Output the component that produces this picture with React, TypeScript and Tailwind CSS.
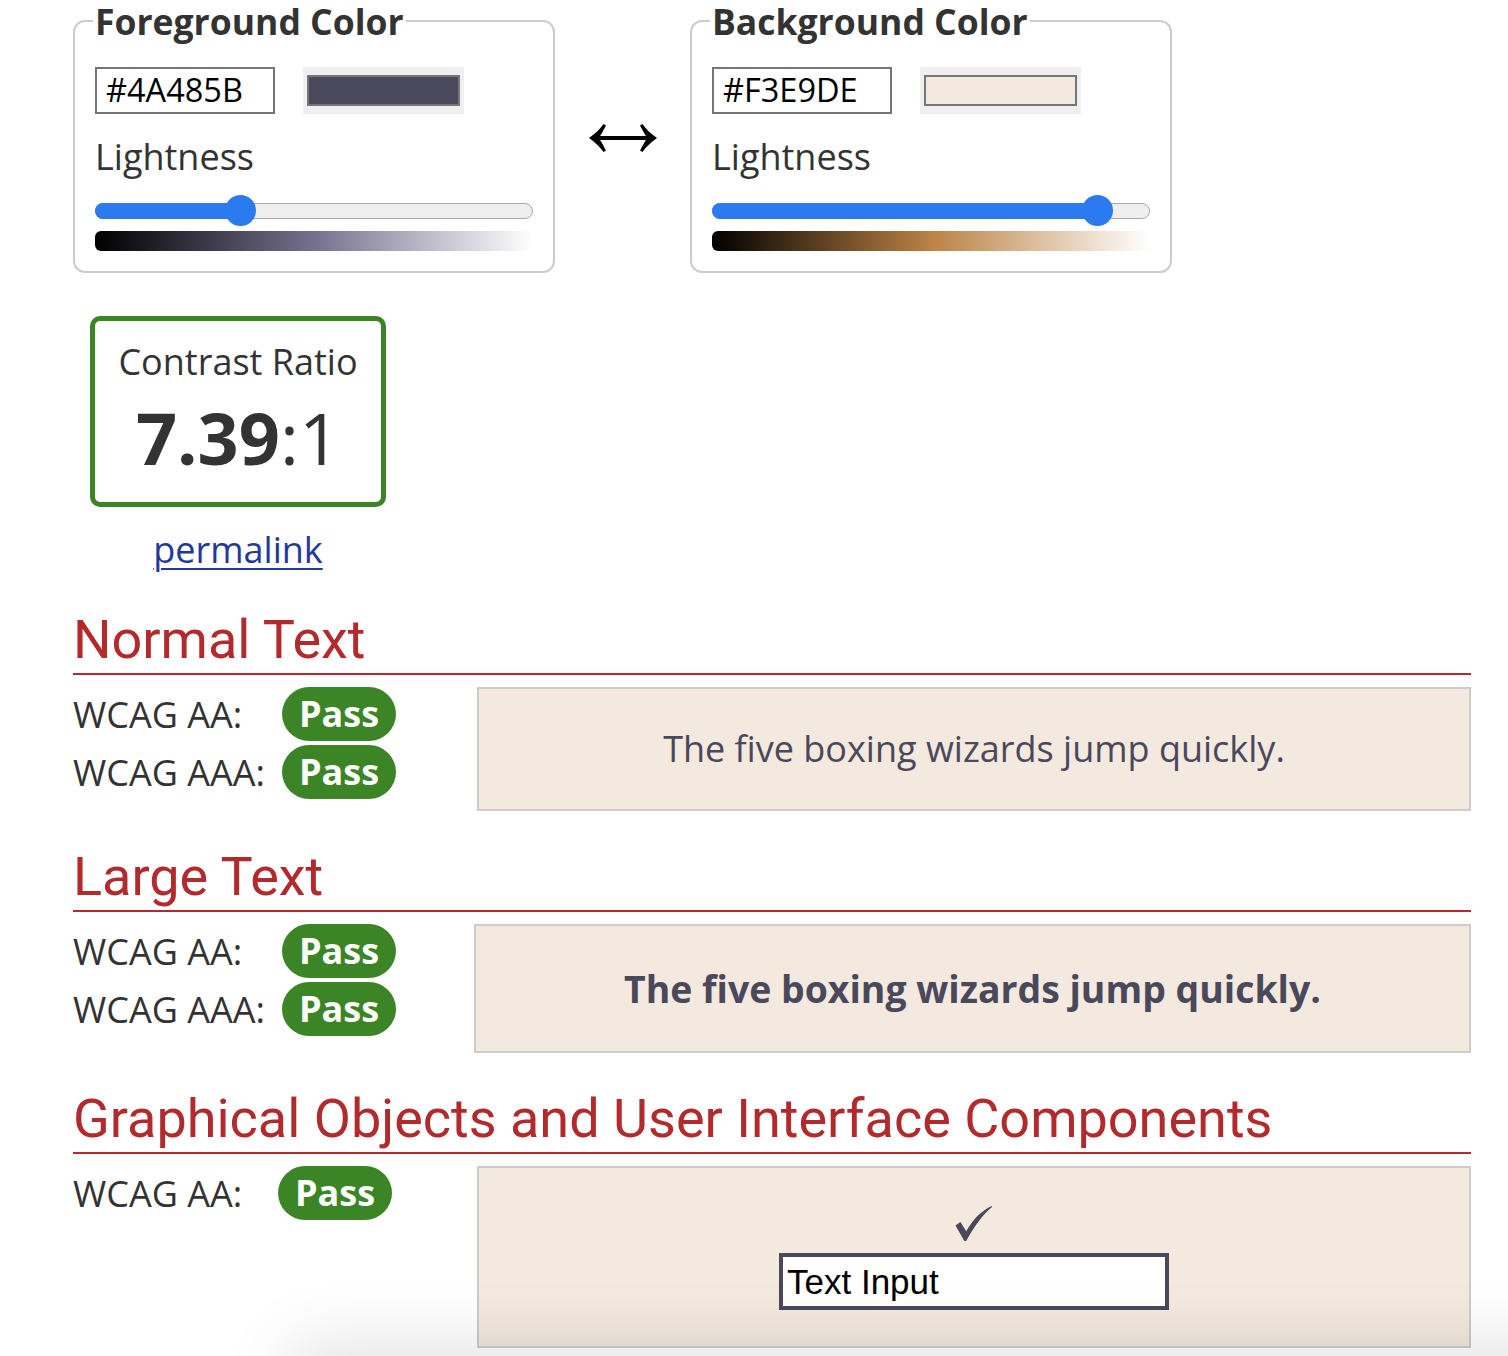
import React from "react";

type FS = { title: string; hex: string; frac: number; grad: string; swatch: string };

function ColorFieldset({ title, hex, frac, grad, swatch }: FS) {
  const trackW = 437.5;
  const thumb = 31;
  const center = thumb / 2 + frac * (trackW - thumb);
  return (
    <fieldset className="w-[482px] rounded-[12px] border-2 border-[#cccccc] px-[20px] pb-[20px]">
      <legend className="ml-[-2px] px-[2px] text-[35.5px] font-bold leading-[42px] text-[#333333]">{title}</legend>
      <div className="mt-[25px] flex h-[47px]">
        <div className="h-[47px] w-[180px] border-2 border-[#767676] pl-[9px] text-[32.5px] leading-[41px] text-black">{hex}</div>
        <div className="ml-[28px] h-[47px] w-[161px] bg-[#efefef] px-[4px] py-[8px]">
          <div className={`h-full w-full border-2 border-[#767676] ${swatch}`} />
        </div>
      </div>
      <div className="mt-[18px] text-[36px] leading-[49px] text-[#333333]">Lightness</div>
      <div className="relative mt-[14px] h-[31px] w-[437.5px]">
        <div className="absolute left-0 right-0 top-[8px] h-[15.5px] rounded-full border border-[#a9a9a9] bg-[#efefef]" />
        <div
          className="absolute left-0 top-[8px] h-[15.5px] rounded-l-full bg-[#2b7af0]"
          style={{ width: center }}
        />
        <div
          className="absolute top-0 h-[31px] w-[31px] rounded-full bg-[#2b7af0]"
          style={{ left: center - thumb / 2 }}
        />
      </div>
      <div className={`mt-[5px] h-[20px] w-[437.5px] rounded-[6px] ${grad}`} />
    </fieldset>
  );
}

function Pill() {
  return (
    <div className="h-[54px] rounded-full bg-[#3c8527] px-[17px] text-[36px] font-bold leading-[54px] text-white">
      Pass
    </div>
  );
}

function LabelRow({ label, w }: { label: string; w: string }) {
  return (
    <div className="flex h-[54px] items-center">
      <div className={`${w} text-[36px] leading-[49px] text-[#333333]`}>{label}</div>
      <Pill />
    </div>
  );
}

function Heading({ children }: { children: React.ReactNode }) {
  return (
    <h2 className="mt-[34px] border-b-2 border-[#b22a2c] pb-[2px] font-['Roboto',sans-serif] text-[54px] leading-[63px] text-[#b22a2c]">
      {children}
    </h2>
  );
}

export default function App() {
  return (
    <div className="relative h-[1356px] overflow-hidden bg-white font-['Open_Sans',sans-serif] text-[#333333]">
      <div className="w-[1471px] pl-[73px]">
        <div className="flex items-start">
          <ColorFieldset
            title="Foreground Color"
            hex="#4A485B"
            frac={0.3196}
            swatch="bg-[#4a485b]"
            grad="bg-[linear-gradient(to_right,#000000,#74718e,#ffffff)]"
          />
          <div className="flex w-[135px] justify-center pt-[124px]">
            <svg width="68" height="28" viewBox="0 0 68 28" fill="#000">
              <path d="M0 14 C6 10 11 5 14.5 0 L17 1.5 C14.5 6 12.5 10 11 12 L57 12 C55.5 10 53.5 6 51 1.5 L53.5 0 C57 5 62 10 68 14 C62 18 57 23 53.5 28 L51 26.5 C53.5 22 55.5 18 57 16 L11 16 C12.5 18 14.5 22 17 26.5 L14.5 28 C11 23 6 18 0 14 Z" />
            </svg>
          </div>
          <ColorFieldset
            title="Background Color"
            hex="#F3E9DE"
            frac={0.911}
            swatch="bg-[#f3e9de]"
            grad="bg-[linear-gradient(to_right,#000000,#bb8244,#ffffff)]"
          />
        </div>

        <div className="ml-[17px] mt-[43px] flex w-[296px] flex-col items-center">
          <div className="w-[296px] rounded-[10px] border-[5px] border-[#3c8527] pb-[25px] pt-[16px] text-center">
            <div className="text-[36px] leading-[49px] text-[#333333]">Contrast Ratio</div>
            <div className="mt-[11px] text-[72px] leading-[80px] text-[#333333]">
              <span className="font-bold">7.39</span>:1
            </div>
          </div>
          <a href="#" className="mt-[18px] text-[36px] leading-[49px] text-[#22399a] underline decoration-2 underline-offset-[5px]">
            permalink
          </a>
        </div>

        <Heading>Normal Text</Heading>
        <div className="mt-[12px] flex items-start">
          <div className="flex w-[404px] flex-col gap-[4px]">
            <LabelRow label="WCAG AA:" w="w-[209px]" />
            <LabelRow label="WCAG AAA:" w="w-[209px]" />
          </div>
          <div className="flex-1 border-2 border-[#cccccc] bg-[#f3e9de] py-[36px] text-center text-[36px] leading-[48px] text-[#4a485b]">
            The five boxing wizards jump quickly.
          </div>
        </div>

        <Heading>Large Text</Heading>
        <div className="mt-[12px] flex items-start">
          <div className="flex w-[401px] flex-col gap-[4px]">
            <LabelRow label="WCAG AA:" w="w-[209px]" />
            <LabelRow label="WCAG AAA:" w="w-[209px]" />
          </div>
          <div className="flex-1 border-2 border-[#cccccc] bg-[#f3e9de] py-[36px] text-center text-[37.4px] font-bold leading-[53px] text-[#4a485b]">
            The five boxing wizards jump quickly.
          </div>
        </div>

        <Heading>Graphical Objects and User Interface Components</Heading>
        <div className="mt-[12px] flex items-start">
          <div className="flex w-[404px] flex-col">
            <LabelRow label="WCAG AA:" w="w-[205px]" />
          </div>
          <div className="flex flex-1 flex-col items-center border-2 border-[#cccccc] bg-[#f3e9de] py-[36px]">
            <svg className="mt-[2px]" width="38" height="36" viewBox="0 0 38 37" fill="#4a485b">
              <path d="M0 20 L5 16.5 L11 26 C17 15 25 6 37 0 L37.5 1 C28 9 19 21 11 36 L9 36 Z" />
            </svg>
            <div className="mt-[11px] h-[57px] w-[390px] border-4 border-[#4a485b] bg-white pl-[4px] font-['Liberation_Sans',Arial,sans-serif] text-[35px] leading-[49px] text-black">
              Text Input
            </div>
          </div>
        </div>
      </div>
      <div className="pointer-events-none absolute left-[300px] right-[-100px] top-[1356px] h-[100px] shadow-[0_0_70px_10px_rgba(0,0,0,0.12)]" />
    </div>
  );
}
